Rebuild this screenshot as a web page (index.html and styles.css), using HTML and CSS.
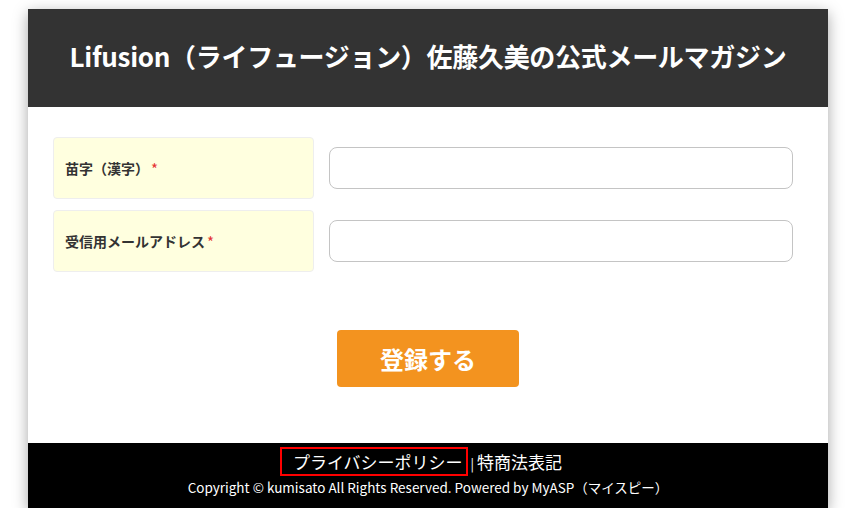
FILE: index.html
```html
<!DOCTYPE html>
<html lang="ja">
<head>
	<meta charset="UTF-8">
	<title>Lifusion 公式メールマガジン</title>
	<link rel="stylesheet" href="styles.css">
</head>
<body>
	<div class="wrap">
		<header class="head">
			<h1>Lifusion（ライフュージョン）佐藤久美の公式メールマガジン</h1>
		</header>
		<form class="form">
			<div class="row">
				<label class="label">苗字（漢字）<span class="req">*</span></label>
				<input class="field" type="text">
			</div>
			<div class="row">
				<label class="label">受信用メールアドレス<span class="req">*</span></label>
				<input class="field" type="text">
			</div>
			<div class="submit">
				<button type="button" class="btn">登録する</button>
			</div>
		</form>
		<footer class="foot">
			<div class="links">
				<a class="privacy">プライバシーポリシー</a><span class="sep">|</span><a>特商法表記</a>
			</div>
			<div class="copy">Copyright © kumisato All Rights Reserved. Powered by MyASP（マイスピー）</div>
		</footer>
	</div>
</body>
</html>
```

FILE: styles.css
```css
body{
	margin: 0;
	background: #fff;
	font-family: "Noto Sans CJK JP", "Noto Sans", sans-serif;
}
.wrap{
	width: 800px;
	margin: 9px 0 0 28px;
	background: #fff;
	box-shadow: 0 4px 14px rgba(0,0,0,0.35);
}
.head{
	background: #333;
	height: 98px;
	box-sizing: border-box;
	padding-bottom: 6px;
	display: flex;
	align-items: center;
	justify-content: center;
}
.head h1{
	margin: 0;
	color: #fff;
	font-size: 26px;
	font-weight: bold;
	letter-spacing: -0.3px;
}
.form{
	padding: 30px 35px 56px 25px;
}
.row{
	display: flex;
	align-items: center;
	margin-bottom: 11px;
}
.label{
	box-sizing: border-box;
	width: 261px;
	height: 62px;
	background: #ffffdf;
	border: 1px solid #eee;
	border-radius: 4px;
	padding-left: 11px;
	display: flex;
	align-items: center;
	font-size: 14px;
	font-weight: bold;
	color: #333;
	margin-right: 15px;
}
.req{
	color: #e53333;
	font-weight: normal;
	font-size: 15px;
	margin-left: 2px;
}
.field{
	box-sizing: border-box;
	flex: 1;
	height: 42px;
	border: 1px solid #c4c4c4;
	border-radius: 8px;
}
.submit{
	display: flex;
	justify-content: center;
	padding-top: 47px;
	padding-left: 10px;
}
.btn{
	width: 182px;
	height: 57px;
	background: #f3931f;
	border: none;
	border-radius: 4px;
	color: #fff;
	font-family: inherit;
	font-size: 24px;
	font-weight: bold;
}
.foot{
	background: #000;
	color: #fff;
	height: 65px;
	text-align: center;
	padding-top: 4px;
	box-sizing: border-box;
}
.links{
	font-size: 17px;
	line-height: 23px;
	padding-right: 14px;
}
.privacy{
	display: inline-block;
	border: 2px solid #f00;
	padding: 1px 3px 1px 11px;
}
.sep{
	font-size: 13px;
	margin: 0 3px;
}
.copy{
	font-size: 13.5px;
	margin-top: 1px;
}
```
